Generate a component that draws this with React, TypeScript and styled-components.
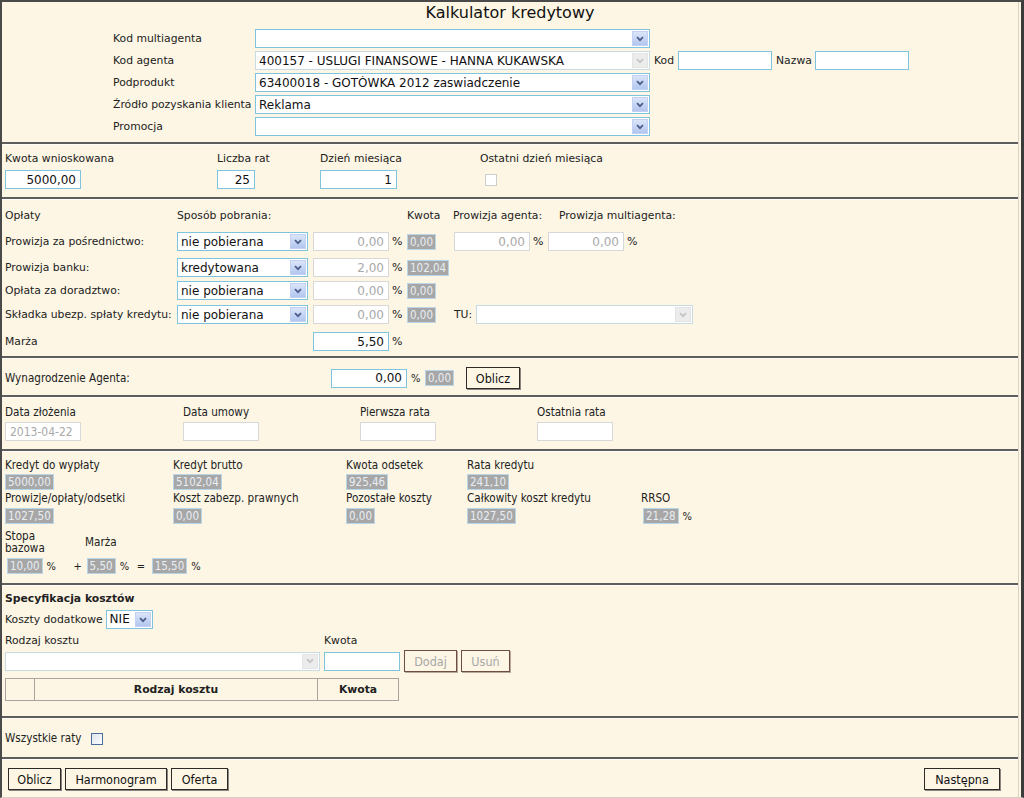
import React from 'react';
import styled, { createGlobalStyle } from 'styled-components';

const VERDANA = `"DejaVu Sans", Verdana, sans-serif`;
const NARROW = `"DejaVu Sans Condensed", "DejaVu Sans", sans-serif`;

const GlobalStyle = createGlobalStyle`
	html, body {
		margin: 0;
		padding: 0;
		background: #ffffff;
	}

	body {
		font-family: ${VERDANA};
		font-size: 10.8px;
		color: #222;
	}
`;

const Frame = styled.div`
	width: 1024px;
	height: 798px;
	box-sizing: border-box;
	border-top: 2px solid #4a4a4a;
	border-left: 2px solid #4a4a4a;
	border-right: 3px solid #3c3c3c;
	border-bottom: 1px solid #d6d0c4;
	background: #fdf6e4;
	overflow: hidden;
	display: flex;
	flex-direction: column;
`;

const Sheet = styled.div`
	flex: 1;
	border-right: 1px solid #d9d3c6;
	margin-right: 2px;
	display: flex;
	flex-direction: column;
`;

const Title = styled.h1`
	margin: 0;
	height: 26px;
	line-height: 22px;
	text-align: center;
	font-family: ${VERDANA};
	font-size: 16px;
	font-weight: normal;
	color: #111;
`;

const Rule = styled.div`
	height: 0;
	border-top: 2px solid #5e5e5e;
	border-bottom: 1px solid #fffdf8;
`;

const Section = styled.section<{ $pt: number; $pb: number; $narrow?: boolean }>`
	padding: ${(p) => p.$pt}px 3px ${(p) => p.$pb}px 3px;
	font-family: ${(p) => (p.$narrow ? NARROW : VERDANA)};
	font-size: ${(p) => (p.$narrow ? '11.6px' : '10.8px')};
`;

/* ---------- form controls ---------- */

const SelectBox = styled.div<{ $w: number; $disabled?: boolean }>`
	width: ${(p) => p.$w}px;
	height: 19px;
	flex-shrink: 0;
	box-sizing: border-box;
	border: 1px solid ${(p) => (p.$disabled ? '#c8dae4' : '#7fc4de')};
	background: #fff;
	display: flex;
	align-items: center;
	padding-left: 3px;
	font-family: ${VERDANA};
	font-size: 12px;
	color: #111;
`;

const SelectText = styled.span`
	flex: 1;
	overflow: hidden;
	white-space: nowrap;
`;

const ArrowBox = styled.span<{ $disabled?: boolean }>`
	width: 16px;
	height: 15px;
	margin-right: 1px;
	box-sizing: border-box;
	display: flex;
	align-items: center;
	justify-content: center;
	border: 1px solid ${(p) => (p.$disabled ? '#e4e4e4' : '#c2d1f1')};
	background: ${(p) =>
		p.$disabled ? '#ececec' : 'linear-gradient(#dbe5f9, #b3c6ef)'};
`;

const Select = ({
	w,
	value = '',
	disabled
}: {
	w: number;
	value?: string;
	disabled?: boolean;
}) => (
	<SelectBox $w={w} $disabled={disabled}>
		<SelectText>{value}</SelectText>
		<ArrowBox $disabled={disabled}>
			<svg width="8" height="6" viewBox="0 0 8 6">
				<path
					d="M1 1.2 L4 4.2 L7 1.2"
					fill="none"
					stroke={disabled ? '#c4c4c4' : '#4c5f8a'}
					strokeWidth="1.8"
				/>
			</svg>
		</ArrowBox>
	</SelectBox>
);

const Field = styled.input<{ $w: number; $muted?: boolean; $left?: boolean; $narrow?: boolean }>`
	width: ${(p) => p.$w}px;
	height: 19px;
	flex-shrink: 0;
	box-sizing: border-box;
	margin: 0;
	padding: 0 4px;
	border: 1px solid ${(p) => (p.$muted ? '#d8d8d8' : '#7fc4de')};
	background: #fff;
	outline: none;
	text-align: ${(p) => (p.$left ? 'left' : 'right')};
	font-family: ${(p) => (p.$narrow ? NARROW : VERDANA)};
	font-size: 12px;
	color: ${(p) => (p.$muted ? '#a9a9a9' : '#111')};
`;

const Badge = styled.span`
	display: inline-block;
	box-sizing: border-box;
	height: 16px;
	line-height: 14px;
	padding: 0 2px;
	background: #a7a7a7;
	border: 1px solid #b9d6e8;
	color: #e9eef3;
	font-family: ${NARROW};
	font-size: 11.5px;
	white-space: nowrap;
`;

const Pct = styled.span<{ $w?: number }>`
	display: inline-block;
	width: ${(p) => p.$w ?? 15}px;
	flex-shrink: 0;
	padding-left: 4px;
	box-sizing: border-box;
	font-size: 11px;
`;

const Check = styled.span<{ $blue?: boolean }>`
	display: inline-block;
	width: 12px;
	height: 12px;
	box-sizing: border-box;
	border: 1px solid ${(p) => (p.$blue ? '#4c6d99' : '#cfcfcf')};
	background: ${(p) => (p.$blue ? 'linear-gradient(135deg, #dfe6ee, #fbfcfd)' : '#fff')};
`;

const Button = styled.button<{ $disabled?: boolean; $w?: number }>`
	height: 22px;
	width: ${(p) => (p.$w ? `${p.$w}px` : 'auto')};
	flex-shrink: 0;
	margin: 0;
	padding: 0 8px;
	background: #fdf6e4;
	border: 1px solid ${(p) => (p.$disabled ? '#6d4f42' : '#2e2a28')};
	box-shadow: 1px 1px 0 ${(p) => (p.$disabled ? '#b9a89c' : '#8a8580')};
	font-family: ${NARROW};
	font-size: 12.5px;
	color: ${(p) => (p.$disabled ? '#a8a8a8' : '#111')};
	cursor: default;
`;

const Gap = styled.span<{ $w: number }>`
	display: inline-block;
	width: ${(p) => p.$w}px;
	flex-shrink: 0;
`;

/* ---------- top: agent ---------- */

const TopForm = styled.div`
	padding: 0 0 4px 111px;
`;

const TopRow = styled.div`
	height: 22px;
	display: flex;
	align-items: flex-start;
	padding-top: 1px;
	box-sizing: border-box;
`;

const TopLabel = styled.span<{ $w?: number }>`
	width: ${(p) => p.$w ?? 142}px;
	line-height: 19px;
	white-space: nowrap;
	flex-shrink: 0;
`;

const Inline = styled.span<{ $ml?: number }>`
	margin-left: ${(p) => p.$ml ?? 0}px;
	line-height: 19px;
	white-space: nowrap;
`;

/* ---------- loan params ---------- */

const ParamsGrid = styled.div`
	display: grid;
	grid-template-columns: 212px 103px 160px 1fr;
	row-gap: 5px;
`;

const Cell = styled.div<{ $pl?: number }>`
	padding-left: ${(p) => p.$pl ?? 0}px;
	line-height: 13px;
	white-space: nowrap;
	display: flex;
	align-items: center;
`;

/* ---------- fees ---------- */

const FeeHead = styled.div`
	display: grid;
	grid-template-columns: 172px 230px 46px 106px 1fr;
	line-height: 13px;
	margin-bottom: 10px;
	white-space: nowrap;
`;

const FeeRow = styled.div<{ $h: number }>`
	height: ${(p) => p.$h}px;
	display: flex;
	align-items: flex-start;
`;

const FeeLabel = styled.span<{ $w?: number }>`
	width: ${(p) => p.$w ?? 172}px;
	flex-shrink: 0;
	line-height: 19px;
	white-space: nowrap;
`;

const PctCell = styled.span`
	width: 18px;
	flex-shrink: 0;
	line-height: 19px;
	padding-left: 3px;
	box-sizing: border-box;
	font-size: 11px;
`;

const KwotaCell = styled.span`
	width: 47px;
	flex-shrink: 0;
	padding-top: 2px;
`;

/* ---------- agent pay ---------- */

const PayRow = styled.div`
	height: 22px;
	display: flex;
	align-items: center;
`;

const PayLabel = styled.span`
	width: 326px;
	flex-shrink: 0;
`;

/* ---------- dates ---------- */

const DatesGrid = styled.div`
	display: grid;
	grid-template-columns: 178px 177px 177px 1fr;
	row-gap: 4px;
	line-height: 12px;
`;

/* ---------- results ---------- */

const ResultGrid = styled.div`
	display: grid;
	grid-template-columns: 168px 173px 121px 174px 1fr;
	line-height: 13px;
	white-space: nowrap;
`;

const ResultCell = styled.div<{ $pt?: number }>`
	padding-top: ${(p) => p.$pt ?? 0}px;
	display: flex;
	align-items: center;
`;

const RateRow = styled.div`
	display: flex;
	align-items: center;
	margin-top: 6px;
	line-height: 12px;
`;

const RateLabel = styled.div<{ $w: number }>`
	width: ${(p) => p.$w}px;
	flex-shrink: 0;
`;

const Formula = styled.div`
	display: flex;
	align-items: center;
	padding-left: 2px;
	margin-top: 4px;
	white-space: nowrap;
`;

const Op = styled.span<{ $w: number; $pl?: number }>`
	width: ${(p) => p.$w}px;
	padding-left: ${(p) => p.$pl ?? 0}px;
	box-sizing: border-box;
	flex-shrink: 0;
	font-size: 11px;
`;

/* ---------- costs ---------- */

const Heading = styled.div`
	font-weight: bold;
	line-height: 13px;
`;

const CostLine = styled.div`
	display: flex;
	align-items: center;
	gap: 3px;
	margin-top: 5px;
	line-height: 19px;
`;

const CostLabels = styled.div`
	display: flex;
	margin-top: 5px;
	line-height: 13px;
`;

const CostInputs = styled.div`
	display: flex;
	align-items: center;
	gap: 4px;
	margin-top: 3px;
`;

const CostTable = styled.table`
	margin: 6px 0 0 0;
	border-collapse: collapse;
	font-size: 10.8px;

	th {
		height: 21px;
		padding: 0;
		border: 1px solid #a9a49c;
		font-weight: bold;
		text-align: center;
	}
`;

/* ---------- footer ---------- */

const AllRow = styled.div`
	display: flex;
	align-items: center;
	gap: 9px;
	line-height: 13px;
`;

const Footer = styled.div`
	display: flex;
	gap: 4px;
	padding: 0 15px 0 3px;
`;

const Spacer = styled.div`
	flex: 1;
`;

const feeRows = [
	{ label: 'Prowizja za pośrednictwo:', mode: 'nie pobierana', rate: '0,00', amount: '0,00', h: 26 },
	{ label: 'Prowizja banku:', mode: 'kredytowana', rate: '2,00', amount: '102,04', h: 23 },
	{ label: 'Opłata za doradztwo:', mode: 'nie pobierana', rate: '0,00', amount: '0,00', h: 24 },
	{ label: 'Składka ubezp. spłaty kredytu:', mode: 'nie pobierana', rate: '0,00', amount: '0,00', h: 27 }
];

const App = () => {
	return (
		<>
			<GlobalStyle />
			<Frame>
				<Sheet>
					<Title>Kalkulator kredytowy</Title>

					<TopForm>
						<TopRow>
							<TopLabel>Kod multiagenta</TopLabel>
							<Select w={395} />
						</TopRow>
						<TopRow>
							<TopLabel>Kod agenta</TopLabel>
							<Select w={395} value="400157 - USLUGI FINANSOWE - HANNA KUKAWSKA" disabled />
							<Inline $ml={4}>Kod</Inline>
							<Gap $w={4} />
							<Field $w={94} $left />
							<Inline $ml={4}>Nazwa</Inline>
							<Gap $w={3} />
							<Field $w={94} $left />
						</TopRow>
						<TopRow>
							<TopLabel>Podprodukt</TopLabel>
							<Select w={395} value="63400018 - GOTÓWKA 2012 zaswiadczenie" />
						</TopRow>
						<TopRow>
							<TopLabel>Źródło pozyskania klienta</TopLabel>
							<Select w={395} value="Reklama" />
						</TopRow>
						<TopRow>
							<TopLabel>Promocja</TopLabel>
							<Select w={395} />
						</TopRow>
					</TopForm>
					<Rule />

					<Section $pt={7} $pb={8}>
						<ParamsGrid>
							<Cell>Kwota wnioskowana</Cell>
							<Cell>Liczba rat</Cell>
							<Cell>Dzień miesiąca</Cell>
							<Cell>Ostatni dzień miesiąca</Cell>
							<Cell><Field $w={76} defaultValue="5000,00" /></Cell>
							<Cell><Field $w={38} defaultValue="25" /></Cell>
							<Cell><Field $w={77} defaultValue="1" /></Cell>
							<Cell $pl={5}><Check /></Cell>
						</ParamsGrid>
					</Section>
					<Rule />

					<Section $pt={9} $pb={5}>
						<FeeHead>
							<span>Opłaty</span>
							<span>Sposób pobrania:</span>
							<span>Kwota</span>
							<span>Prowizja agenta:</span>
							<span>Prowizja multiagenta:</span>
						</FeeHead>
						{feeRows.map((row, i) => (
							<FeeRow key={row.label} $h={row.h}>
								<FeeLabel>{row.label}</FeeLabel>
								<Select w={131} value={row.mode} />
								<Gap $w={5} />
								<Field $w={76} $muted defaultValue={row.rate} />
								<PctCell>%</PctCell>
								<KwotaCell><Badge>{row.amount}</Badge></KwotaCell>
								{i === 0 && (
									<>
										<Field $w={76} $muted defaultValue="0,00" />
										<PctCell>%</PctCell>
										<Field $w={76} $muted defaultValue="0,00" />
										<PctCell>%</PctCell>
									</>
								)}
								{i === 3 && (
									<>
										<FeeLabel $w={22}>TU:</FeeLabel>
										<Select w={217} disabled />
									</>
								)}
							</FeeRow>
						))}
						<FeeRow $h={19}>
							<FeeLabel>Marża</FeeLabel>
							<Gap $w={136} />
							<Field $w={76} defaultValue="5,50" />
							<PctCell>%</PctCell>
						</FeeRow>
					</Section>
					<Rule />

					<Section $pt={8} $pb={6} $narrow>
						<PayRow>
							<PayLabel>Wynagrodzenie Agenta:</PayLabel>
							<Field $w={76} defaultValue="0,00" />
							<Pct $w={18}>%</Pct>
							<Badge>0,00</Badge>
							<Gap $w={12} />
							<Button $w={54}>Oblicz</Button>
						</PayRow>
					</Section>
					<Rule />

					<Section $pt={8} $pb={8} $narrow>
						<DatesGrid>
							<span>Data złożenia</span>
							<span>Data umowy</span>
							<span>Pierwsza rata</span>
							<span>Ostatnia rata</span>
							<span><Field $w={76} $muted $left $narrow defaultValue="2013-04-22" /></span>
							<span><Field $w={76} $muted /></span>
							<span><Field $w={76} $muted /></span>
							<span><Field $w={76} $muted /></span>
						</DatesGrid>
					</Section>
					<Rule />

					<Section $pt={7} $pb={9} $narrow>
						<ResultGrid>
							<ResultCell>Kredyt do wypłaty</ResultCell>
							<ResultCell>Kredyt brutto</ResultCell>
							<ResultCell>Kwota odsetek</ResultCell>
							<ResultCell>Rata kredytu</ResultCell>
							<ResultCell />
							<ResultCell $pt={2}><Badge>5000,00</Badge></ResultCell>
							<ResultCell $pt={2}><Badge>5102,04</Badge></ResultCell>
							<ResultCell $pt={2}><Badge>925,46</Badge></ResultCell>
							<ResultCell $pt={2}><Badge>241,10</Badge></ResultCell>
							<ResultCell />
							<ResultCell $pt={2}>Prowizje/opłaty/odsetki</ResultCell>
							<ResultCell $pt={2}>Koszt zabezp. prawnych</ResultCell>
							<ResultCell $pt={2}>Pozostałe koszty</ResultCell>
							<ResultCell $pt={2}>Całkowity koszt kredytu</ResultCell>
							<ResultCell $pt={2}>RRSO</ResultCell>
							<ResultCell $pt={3}><Badge>1027,50</Badge></ResultCell>
							<ResultCell $pt={3}><Badge>0,00</Badge></ResultCell>
							<ResultCell $pt={3}><Badge>0,00</Badge></ResultCell>
							<ResultCell $pt={3}><Badge>1027,50</Badge></ResultCell>
							<ResultCell $pt={3}>
								<Gap $w={2} />
								<Badge>21,28</Badge>
								<Pct $w={17}>%</Pct>
							</ResultCell>
						</ResultGrid>
						<RateRow>
							<RateLabel $w={80}>Stopa<br />bazowa</RateLabel>
							<RateLabel $w={60}>Marża</RateLabel>
						</RateRow>
						<Formula>
							<Badge>10,00</Badge>
							<Op $w={31} $pl={4}>%</Op>
							<Op $w={13}>+</Op>
							<Badge>5,50</Badge>
							<Op $w={21} $pl={4}>%</Op>
							<Op $w={15}>=</Op>
							<Badge>15,50</Badge>
							<Op $w={16} $pl={4}>%</Op>
						</Formula>
					</Section>
					<Rule />

					<Section $pt={6} $pb={15}>
						<Heading>Specyfikacja kosztów</Heading>
						<CostLine>
							<span>Koszty dodatkowe</span>
							<Select w={47} value="NIE" />
						</CostLine>
						<CostLabels>
							<span style={{ width: 319 }}>Rodzaj kosztu</span>
							<span>Kwota</span>
						</CostLabels>
						<CostInputs>
							<Select w={315} disabled />
							<Field $w={76} />
							<Button $disabled $w={53}>Dodaj</Button>
							<Button $disabled $w={49}>Usuń</Button>
						</CostInputs>
						<CostTable>
							<thead>
								<tr>
									<th style={{ width: 28 }} />
									<th style={{ width: 282 }}>Rodzaj kosztu</th>
									<th style={{ width: 80 }}>Kwota</th>
								</tr>
							</thead>
						</CostTable>
					</Section>
					<Rule />

					<Section $pt={13} $pb={12} $narrow>
						<AllRow>
							<span>Wszystkie raty</span>
							<Check $blue />
						</AllRow>
					</Section>
					<Rule />

					<Section $pt={8} $pb={0} $narrow>
						<Footer>
							<Button $w={53}>Oblicz</Button>
							<Button $w={102}>Harmonogram</Button>
							<Button $w={57}>Oferta</Button>
							<Spacer />
							<Button $w={76}>Następna</Button>
						</Footer>
					</Section>
				</Sheet>
			</Frame>
		</>
	);
};

export default App;
